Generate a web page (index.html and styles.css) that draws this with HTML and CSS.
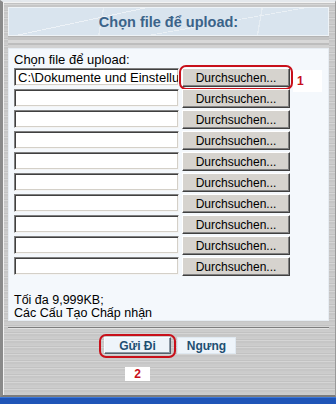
FILE: index.html
```html
<!DOCTYPE html>
<html lang="vi">
<head>
    <meta charset="UTF-8">
    <meta name="viewport" content="width=device-width, initial-scale=1.0">
    <title>Chọn file để upload</title>
    <link rel="stylesheet" href="styles.css">
</head>
<body>
    <div class="window">
        <div class="frame">
            <div class="title-panel">
                <h1>Chọn file để upload:</h1>
            </div>
            <div class="strip"></div>

            <div class="content">
                <div class="label">Chọn file để upload:</div>
                <div class="rows">
                    <div class="row">
                        <div class="file-path">C:\Dokumente und Einstellu</div>
                        <div class="browse-wrap">
                            <button class="browse">Durchsuchen...</button>
                            <span class="ring"></span>
                        </div>
                        <span class="marker marker-side">1</span>
                    </div>
                    <div class="row"><div class="file-path"></div><div class="browse-wrap"><button class="browse">Durchsuchen...</button></div></div>
                    <div class="row"><div class="file-path"></div><div class="browse-wrap"><button class="browse">Durchsuchen...</button></div></div>
                    <div class="row"><div class="file-path"></div><div class="browse-wrap"><button class="browse">Durchsuchen...</button></div></div>
                    <div class="row"><div class="file-path"></div><div class="browse-wrap"><button class="browse">Durchsuchen...</button></div></div>
                    <div class="row"><div class="file-path"></div><div class="browse-wrap"><button class="browse">Durchsuchen...</button></div></div>
                    <div class="row"><div class="file-path"></div><div class="browse-wrap"><button class="browse">Durchsuchen...</button></div></div>
                    <div class="row"><div class="file-path"></div><div class="browse-wrap"><button class="browse">Durchsuchen...</button></div></div>
                    <div class="row"><div class="file-path"></div><div class="browse-wrap"><button class="browse">Durchsuchen...</button></div></div>
                    <div class="row"><div class="file-path"></div><div class="browse-wrap"><button class="browse">Durchsuchen...</button></div></div>
                </div>
                <div class="note">Tối đa 9,999KB;<br>Các Cấu Tạo Chấp nhận</div>
            </div>

            <div class="divider"></div>

            <div class="actions">
                <div class="submit-group">
                    <div class="submit-wrap">
                        <button class="action primary">Gửi Đi</button>
                        <span class="ring ring-submit"></span>
                    </div>
                    <span class="marker marker-below">2</span>
                </div>
                <button class="action">Ngưng</button>
            </div>
        </div>
        <div class="taskbar"></div>
    </div>
</body>
</html>
```

FILE: styles.css
```css
html, body {
    margin: 0;
    padding: 0;
}
body {
    width: 336px;
    height: 404px;
    overflow: hidden;
    font-family: "Liberation Sans", Arial, sans-serif;
    font-size: 13px;
    color: #000;
    background: #c9c9c9;
}
.window {
    display: flex;
    flex-direction: column;
    height: 404px;
}
.frame {
    box-sizing: border-box;
    height: 397px;
    padding: 5px 6px 0 5px;
    border-top: 2px solid #e4e8ec;
    border-left: 3px solid #8a8a8a;
    border-right: 1px solid #9a9a9a;
    border-bottom: 2px solid #7c7c7c;
    box-shadow: inset 1px 1px 0 #f2f2f2;
    background: repeating-linear-gradient(180deg, #cdcdcd 0 1px, #c2c2c2 1px 2px, #d5d5d5 2px 3px, #c6c6c6 3px 5px, #cbcbcb 5px 7px);
}
.title-panel {
    height: 27px;
    display: flex;
    align-items: center;
    justify-content: center;
    border: 1px solid #eef3f7;
    background-color: #d9e4ee;
    background-image:
        linear-gradient(168deg, transparent 0 30%, #edf2f7 30% 31%, transparent 31% 100%),
        linear-gradient(170deg, transparent 0 62%, #eaf0f5 62% 63%, transparent 63% 100%),
        linear-gradient(100deg, transparent 0 29%, #e6edf3 29% 29.4%, transparent 29.4% 100%),
        linear-gradient(100deg, transparent 0 78%, #e6edf3 78% 78.4%, transparent 78.4% 100%);
}
.title-panel h1 {
    margin: 0;
    font-size: 14.5px;
    font-weight: bold;
    color: #3b6389;
}
.strip {
    height: 11px;
    border-top: 1px solid #b4b4b4;
    background: linear-gradient(180deg, #c4c4c4 0 3px, #d8d8d8 3px 6px, #bdbdbd 6px 8px, #d2d2d2 8px 11px);
}
.content {
    box-sizing: border-box;
    height: 273px;
    padding: 4px 5px 0 5px;
    background: #f4f8fc;
    border: 1px solid #e6ecf2;
}
.label {
    line-height: 14px;
    height: 14px;
}
.rows {
    margin-top: 1px;
}
.row {
    display: flex;
    align-items: flex-start;
    gap: 3px;
    height: 21px;
}
.file-path {
    box-sizing: border-box;
    width: 165px;
    height: 18px;
    padding: 1px 2px 0 3px;
    line-height: 15px;
    white-space: nowrap;
    overflow: hidden;
    background: #fff;
    border: 1px solid;
    border-color: #808080 #f4f4f4 #f4f4f4 #808080;
    box-shadow: inset 1px 1px 0 #404040, inset -1px -1px 0 #d4d0c8;
}
.browse-wrap,
.submit-wrap {
    position: relative;
}
.browse {
    display: block;
    box-sizing: border-box;
    width: 108px;
    height: 19px;
    padding: 0;
    font-family: "Liberation Sans", Arial, sans-serif;
    font-size: 12px;
    color: #000;
    background: #d6d3ce;
    border: 1px solid;
    border-color: #fff #404040 #404040 #fff;
    box-shadow: inset -1px -1px 0 #808080;
}
.ring {
    position: absolute;
    left: -3px;
    top: -3px;
    right: -3px;
    bottom: -3px;
    border: 2px solid #c8101a;
    border-radius: 7px;
}
.marker {
    box-sizing: border-box;
    font-size: 12px;
    font-weight: bold;
    color: #c8101a;
    background: #fff;
}
.marker-side {
    width: 29px;
    height: 22px;
    padding: 4px 0 0 4px;
    margin-top: 2px;
}
.note {
    margin-top: 16px;
    font-size: 12.5px;
    line-height: 13px;
}
.divider {
    height: 0;
    margin-top: 6px;
    border-top: 1px solid #7d7d7d;
    border-bottom: 1px solid #e2e2e2;
}
.actions {
    display: flex;
    align-items: flex-start;
    gap: 6px;
    padding: 8px 0 0 96px;
}
.submit-group {
    display: flex;
    flex-direction: column;
    align-items: center;
}
.action {
    box-sizing: border-box;
    height: 17px;
    padding: 0;
    width: 59px;
    font-family: "Liberation Sans", Arial, sans-serif;
    font-size: 12px;
    font-weight: bold;
    color: #1f4f72;
    background: #eef4fa;
    border: 1px solid #dfe8f0;
}
.action.primary {
    display: block;
    width: 67px;
    border-color: #f8fbfe #55616c #55616c #f8fbfe;
    box-shadow: inset -1px -1px 0 #8b98a4;
}
.ring-submit {
    left: -5px;
    right: -5px;
    top: -3px;
    bottom: -4px;
}
.marker-below {
    width: 25px;
    height: 14px;
    margin-top: 13px;
    line-height: 14px;
    text-align: center;
}
.taskbar {
    flex: 1;
    background: linear-gradient(180deg, #3d78d8 0 1px, #1f55b8 1px 100%);
}
```
